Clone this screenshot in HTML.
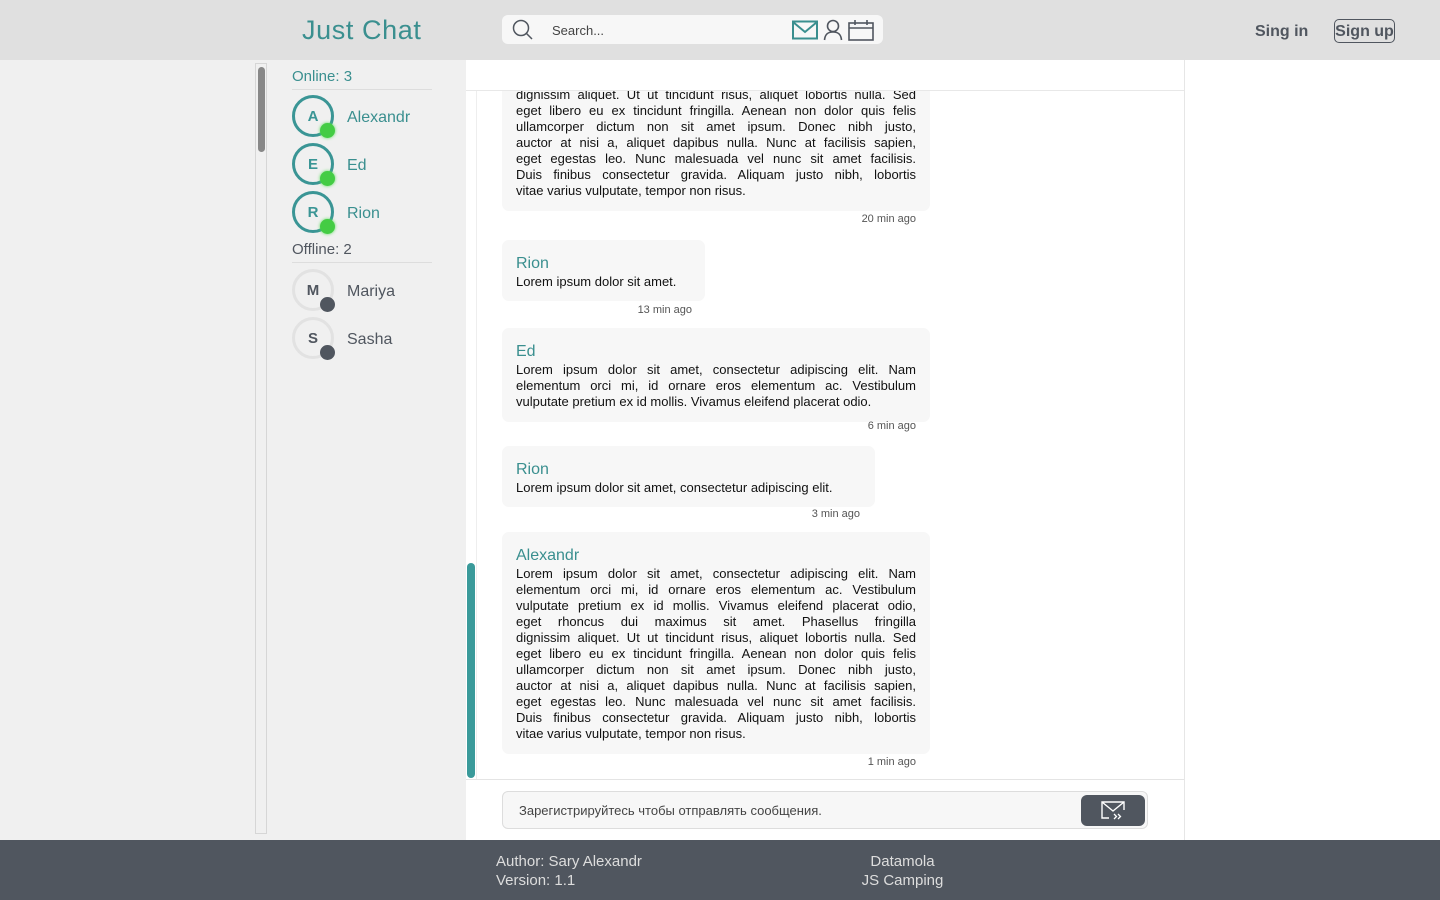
<!DOCTYPE html>
<html><head><meta charset="utf-8"><style>
*{margin:0;padding:0;box-sizing:border-box}
body{width:1440px;height:900px;position:relative;overflow:hidden;font-family:"Liberation Sans",Arial,sans-serif;background:#fff;color:#222}
.abs{position:absolute}
.teal{color:#3a8f8f}
.hdr{left:0;top:0;width:1440px;height:60px;background:#e0e0e0}
.left{left:0;top:60px;width:466px;height:780px;background:#f0f0f0}
.msg{position:absolute;left:502px;background:#f7f7f7;border-radius:7px;padding:14px 14px 12px 14px}
.msg .n{font-size:16px;line-height:20px;color:#3a8f8f}
.msg .l{font-size:13px;line-height:16px;color:#111;text-align:justify;text-align-last:justify;white-space:nowrap}
.msg .l.e{text-align-last:left}
.t{position:absolute;font-size:11px;color:#555;text-align:right}
.av{position:absolute;width:42px;height:42px;border-radius:50%;border:3px solid #3a9595;font-weight:bold;font-size:15px;color:#3a9595;text-align:center;line-height:37px}
.av.off{border-color:#e2e2e2;color:#50565f}
.dot{position:absolute;width:15px;height:15px;border-radius:50%;background:#44cc44;box-shadow:0 0 3px #5d5}
.dot.off{background:#50565f;box-shadow:none}
.nm{position:absolute;font-size:16px;left:347px}
</style></head><body>
<div class="abs hdr"></div>
<div class="abs teal" style="left:302px;top:15px;font-size:27px;letter-spacing:0.6px">Just Chat</div>
<div class="abs" style="left:502px;top:15px;width:381px;height:29px;background:#f7f7f7;border-radius:6px"></div>
<svg class="abs" style="left:511px;top:19px" width="24" height="22" viewBox="0 0 24 22"><circle cx="10" cy="9" r="7.5" fill="none" stroke="#50565f" stroke-width="1.5"/><path d="M15.5 14.5 L21 20" stroke="#50565f" stroke-width="1.5"/></svg>
<div class="abs" style="left:552px;top:23px;font-size:13px;color:#444">Search...</div>
<svg class="abs" style="left:792px;top:20px" width="26" height="20"><rect x="1" y="1.5" width="24" height="17" fill="none" stroke="#3a8f8f" stroke-width="2"/><path d="M1 2 L13 12 L25 2" fill="none" stroke="#3a8f8f" stroke-width="2"/></svg>
<svg class="abs" style="left:823px;top:19px" width="20" height="22"><circle cx="10" cy="7" r="5.5" fill="none" stroke="#50565f" stroke-width="1.6"/><path d="M1.5 21 C2 15 5 13 10 13 C15 13 18 15 18.5 21" fill="none" stroke="#50565f" stroke-width="1.6"/></svg>
<svg class="abs" style="left:848px;top:19px" width="26" height="22"><rect x="1" y="4" width="24" height="17" fill="none" stroke="#50565f" stroke-width="1.6"/><path d="M1 9 H25 M7 1 V6 M19 1 V6" stroke="#50565f" stroke-width="1.6"/></svg>
<div class="abs" style="left:1255px;top:23px;font-size:16px;font-weight:bold;color:#50565f">Sing in</div>
<div class="abs" style="left:1334px;top:19px;width:61px;height:24px;border:1px solid #50565f;border-radius:5px;font-size:16px;font-weight:bold;color:#50565f;text-align:center;line-height:24px">Sign up</div>

<div class="abs left"></div>
<div class="abs" style="left:255px;top:63px;width:12px;height:771px;border:1px solid #d6d6d6"></div>
<div class="abs" style="left:258px;top:67px;width:7px;height:85px;background:#888;border-radius:4px"></div>
<div class="abs teal" style="left:292px;top:68px;font-size:15px">Online: 3</div>
<div class="abs" style="left:292px;top:89px;width:140px;height:1px;background:#ddd"></div>
<div class="av" style="left:292px;top:95px">A</div><div class="dot" style="left:320px;top:123px"></div><div class="nm teal" style="top:109px">Alexandr</div>
<div class="av" style="left:292px;top:143px">E</div><div class="dot" style="left:320px;top:171px"></div><div class="nm teal" style="top:157px">Ed</div>
<div class="av" style="left:292px;top:191px">R</div><div class="dot" style="left:320px;top:219px"></div><div class="nm teal" style="top:205px">Rion</div>
<div class="abs" style="left:292px;top:241px;font-size:15px;color:#50565f">Offline: 2</div>
<div class="abs" style="left:292px;top:262px;width:140px;height:1px;background:#ddd"></div>
<div class="av off" style="left:292px;top:269px">M</div><div class="dot off" style="left:320px;top:297px"></div><div class="nm" style="top:283px;color:#50565f">Mariya</div>
<div class="av off" style="left:292px;top:317px">S</div><div class="dot off" style="left:320px;top:345px"></div><div class="nm" style="top:331px;color:#50565f">Sasha</div>

<div class="abs" style="left:466px;top:60px;width:719px;height:780px;border-right:1px solid #e6e6e6;background:#fff"></div>
<div class="abs" style="left:476px;top:91px;width:708px;height:688px;border-left:1px solid #eee;overflow:hidden">
 <div style="position:absolute;left:-477px;top:-91px;width:1440px;height:900px">
  <div class="msg" style="top:-11px;width:428px"><div class="n">Alexandr</div>
   <div class="l">Lorem ipsum dolor sit amet, consectetur adipiscing elit. Nam</div>
   <div class="l">elementum orci mi, id ornare eros elementum ac. Vestibulum</div>
   <div class="l">vulputate pretium ex id mollis. Vivamus eleifend placerat odio,</div>
   <div class="l">eget rhoncus dui maximus sit amet. Phasellus fringilla</div>
   <div class="l">dignissim aliquet. Ut ut tincidunt risus, aliquet lobortis nulla. Sed</div>
   <div class="l">eget libero eu ex tincidunt fringilla. Aenean non dolor quis felis</div>
   <div class="l">ullamcorper dictum non sit amet ipsum. Donec nibh justo,</div>
   <div class="l">auctor at nisi a, aliquet dapibus nulla. Nunc at facilisis sapien,</div>
   <div class="l">eget egestas leo. Nunc malesuada vel nunc sit amet facilisis.</div>
   <div class="l">Duis finibus consectetur gravida. Aliquam justo nibh, lobortis</div>
   <div class="l e">vitae varius vulputate, tempor non risus.</div>
  </div>
  <div class="t" style="left:780px;width:136px;top:213px">20 min ago</div>

  <div class="msg" style="top:240px;width:203px;height:61px"><div class="n">Rion</div><div class="l e">Lorem ipsum dolor sit amet.</div></div>
  <div class="t" style="left:560px;width:132px;top:304px">13 min ago</div>

  <div class="msg" style="top:328px;width:428px"><div class="n">Ed</div>
   <div class="l">Lorem ipsum dolor sit amet, consectetur adipiscing elit. Nam</div>
   <div class="l">elementum orci mi, id ornare eros elementum ac. Vestibulum</div>
   <div class="l e">vulputate pretium ex id mollis. Vivamus eleifend placerat odio.</div>
  </div>
  <div class="t" style="left:780px;width:136px;top:420px">6 min ago</div>

  <div class="msg" style="top:446px;width:373px;height:61px"><div class="n">Rion</div><div class="l e">Lorem ipsum dolor sit amet, consectetur adipiscing elit.</div></div>
  <div class="t" style="left:720px;width:140px;top:508px">3 min ago</div>

  <div class="msg" style="top:532px;width:428px"><div class="n">Alexandr</div>
   <div class="l">Lorem ipsum dolor sit amet, consectetur adipiscing elit. Nam</div>
   <div class="l">elementum orci mi, id ornare eros elementum ac. Vestibulum</div>
   <div class="l">vulputate pretium ex id mollis. Vivamus eleifend placerat odio,</div>
   <div class="l">eget rhoncus dui maximus sit amet. Phasellus fringilla</div>
   <div class="l">dignissim aliquet. Ut ut tincidunt risus, aliquet lobortis nulla. Sed</div>
   <div class="l">eget libero eu ex tincidunt fringilla. Aenean non dolor quis felis</div>
   <div class="l">ullamcorper dictum non sit amet ipsum. Donec nibh justo,</div>
   <div class="l">auctor at nisi a, aliquet dapibus nulla. Nunc at facilisis sapien,</div>
   <div class="l">eget egestas leo. Nunc malesuada vel nunc sit amet facilisis.</div>
   <div class="l">Duis finibus consectetur gravida. Aliquam justo nibh, lobortis</div>
   <div class="l e">vitae varius vulputate, tempor non risus.</div>
  </div>
  <div class="t" style="left:780px;width:136px;top:756px">1 min ago</div>
 </div>
</div>
<div class="abs" style="left:466px;top:60px;width:718px;height:31px;background:#fff;border-bottom:1px solid #e8e8e8"></div>
<div class="abs" style="left:467px;top:563px;width:8px;height:215px;background:#3a9a9a;border-radius:4px"></div>
<div class="abs" style="left:466px;top:779px;width:718px;height:1px;background:#e4e4e4"></div>
<div class="abs" style="left:502px;top:791px;width:646px;height:38px;background:#f7f7f7;border:1px solid #ddd;border-radius:6px"></div>
<div class="abs" style="left:519px;top:803px;font-size:13px;color:#444">Зарегистрируйтесь чтобы отправлять сообщения.</div>
<div class="abs" style="left:1081px;top:795px;width:64px;height:31px;background:#50565f;border-radius:6px"></div>
<svg class="abs" style="left:1100px;top:800px" width="26" height="22"><path d="M9 18 H2 V2 H24 V10" fill="none" stroke="#fff" stroke-width="1.4"/><path d="M2 2 L13 11 L24 2" fill="none" stroke="#fff" stroke-width="1.4"/><path d="M14 14 L16.5 16.5 L14 19 M18 14 L20.5 16.5 L18 19" fill="none" stroke="#fff" stroke-width="1.3"/></svg>

<div class="abs" style="left:0;top:840px;width:1440px;height:60px;background:#50565f"></div>
<div class="abs" style="left:496px;top:852px;font-size:15px;line-height:19px;color:#ddd">Author: Sary Alexandr<br>Version: 1.1</div>
<div class="abs" style="left:835px;top:852px;width:135px;text-align:center;font-size:15px;line-height:19px;color:#ddd">Datamola<br>JS Camping</div>
</body></html>
